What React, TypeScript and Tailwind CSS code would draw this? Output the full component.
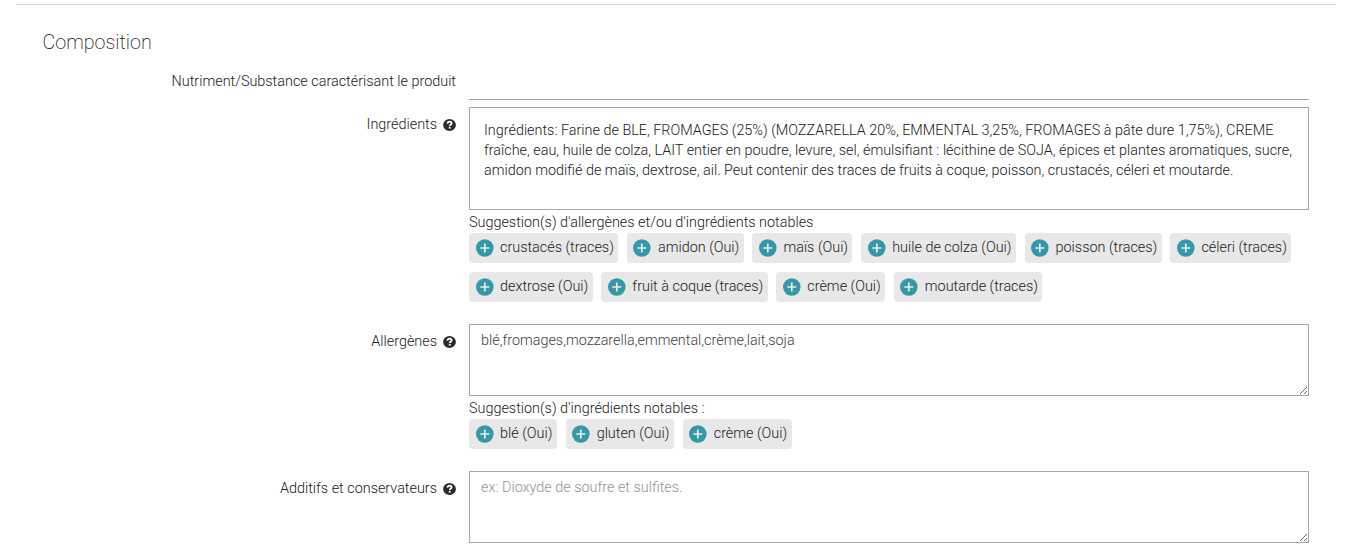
import type { ReactNode } from "react";

function HelpIcon() {
  return (
    <svg className="-mt-px ml-1.5 block h-3 w-[13px] shrink-0" viewBox="0 0 13 12" aria-hidden="true">
      <ellipse cx="6.5" cy="6" rx="6.4" ry="6" fill="#2b2b2b" />
      <path d="M4.4 4.6C4.6 3.2 5.5 2.6 6.6 2.6c1.2 0 2 .6 2 1.7 0 1.5-1.9 1.3-1.9 2.8" fill="none" stroke="#fff" strokeWidth="1.8" />
      <rect x="5.8" y="7.9" width="1.8" height="1.7" fill="#fff" />
    </svg>
  );
}

function PlusIcon() {
  return (
    <svg className="block size-[18px] shrink-0" viewBox="0 0 18 18" aria-hidden="true">
      <circle cx="8.8" cy="9" r="8.8" fill="#3598a9" />
      <path d="M8.8 4.5v9M4.3 9h9" stroke="#ececec" strokeWidth="1.7" />
    </svg>
  );
}

function Chip({ children }: { children: ReactNode }) {
  return (
    <button type="button" className="flex h-[30px] items-center rounded bg-[#e8e8e8] pr-[4.3px] pl-[6.5px]">
      <PlusIcon />
      <span className="ml-[6.5px] whitespace-nowrap">{children}</span>
    </button>
  );
}

function Row({ label, help, labelClass, children }: { label: string; help?: boolean; labelClass: string; children?: ReactNode }) {
  return (
    <div className="flex">
      <div className={`flex h-5 w-[456px] shrink-0 items-center justify-end ${labelClass}`}>
        <span>{label}</span>
        {help && <HelpIcon />}
      </div>
      <div className="ml-[13px] w-[840px]">{children}</div>
    </div>
  );
}

const detected = [
  "crustacés (traces)",
  "amidon (Oui)",
  "maïs (Oui)",
  "huile de colza (Oui)",
  "poisson (traces)",
  "céleri (traces)",
  "dextrose (Oui)",
  "fruit à coque (traces)",
  "crème (Oui)",
  "moutarde (traces)",
];

const notable = ["blé (Oui)", "gluten (Oui)", "crème (Oui)"];

export default function App() {
  return (
    <main className="h-[556px] w-[1348px] overflow-hidden bg-white pt-1 font-['Roboto',sans-serif] text-[14.4px] leading-5 font-light text-[#212121]">
      <hr className="mr-3 ml-4 border-t border-[#d6d6d6]" />
      <h2 className="mt-6 ml-[42.5px] text-[19.7px] leading-7 font-extralight">Composition</h2>
      <div className="mt-3.5">
        <Row label="Nutriment/Substance caractérisant le produit" labelClass="mt-px">
          <input className="block h-[29px] w-full border-b border-[#a9a9a9] outline-none" />
        </Row>
      </div>
      <div className="mt-[7px]">
        <Row label="Ingrédients" help labelClass="mt-2">
          <div className="h-[103px] border border-[#a9a9a9] px-[14px] pt-[13px] whitespace-nowrap">
            Ingrédients: Farine de BLE, FROMAGES (25%) (MOZZARELLA 20%, EMMENTAL 3,25%, FROMAGES à pâte dure 1,75%), CREME
            <br />
            fraîche, eau, huile de colza, LAIT entier en poudre, levure, sel, émulsifiant : lécithine de SOJA, épices et plantes aromatiques, sucre,
            <br />
            amidon modifié de maïs, dextrose, ail. Peut contenir des traces de fruits à coque, poisson, crustacés, céleri et moutarde.
          </div>
          <p className="mt-[3px]">Suggestion(s) d'allergènes et/ou d'ingrédients notables</p>
          <div className="flex flex-wrap gap-x-[8.8px] gap-y-[9px]">
            {detected.map((name) => (
              <Chip key={name}>{name}</Chip>
            ))}
          </div>
        </Row>
      </div>
      <div className="mt-[22px]">
        <Row label="Allergènes" help labelClass="mt-2">
          <textarea
            className="block h-[72px] w-full resize border border-[#a9a9a9] px-[11px] pt-1.5 text-[#424242] outline-none"
            defaultValue="blé,fromages,mozzarella,emmental,crème,lait,soja"
          />
          <p className="mt-[3px]">Suggestion(s) d'ingrédients notables :</p>
          <div className="flex gap-[9px]">
            {notable.map((name) => (
              <Chip key={name}>{name}</Chip>
            ))}
          </div>
        </Row>
      </div>
      <div className="mt-[22px]">
        <Row label="Additifs et conservateurs" help labelClass="mt-2">
          <textarea
            className="block h-[72px] w-full resize border border-[#a9a9a9] px-[11px] pt-1.5 outline-none placeholder:text-[#949494]"
            placeholder="ex: Dioxyde de soufre et sulfites."
          />
        </Row>
      </div>
    </main>
  );
}
